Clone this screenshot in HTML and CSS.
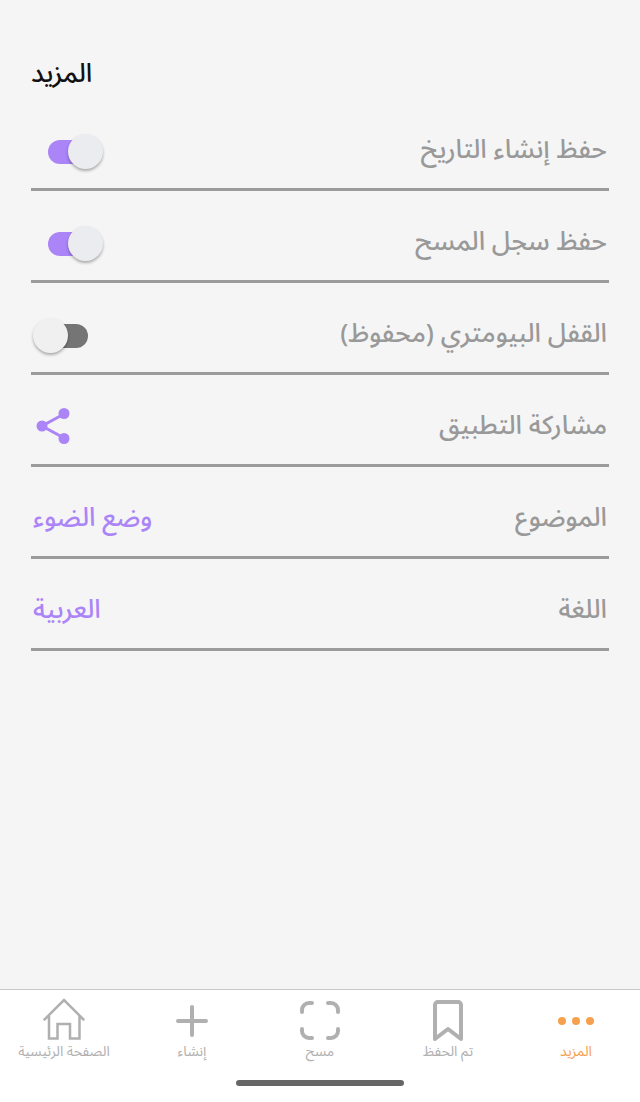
FILE: index.html
```html
<!DOCTYPE html>
<html lang="ar" dir="rtl">

<head>
    <meta charset="UTF-8">
    <meta name="viewport" content="width=device-width, initial-scale=1.0">
    <title>المزيد</title>

    <link rel="stylesheet" href="styles.css">
</head>

<body>
    <main class="settings">
        <h1 class="title">المزيد</h1>

        <div class="row">
            <label for="save-created">حفظ إنشاء التاريخ</label>
            <input class="switch" type="checkbox" id="save-created" checked>
        </div>
        <div class="row">
            <label for="save-scans">حفظ سجل المسح</label>
            <input class="switch" type="checkbox" id="save-scans" checked>
        </div>
        <div class="row">
            <label for="biometric">القفل البيومتري (محفوظ)</label>
            <input class="switch" type="checkbox" id="biometric">
        </div>
        <button class="row" type="button">
            <span>مشاركة التطبيق</span>
            <svg class="share" viewBox="0 0 44 40">
                <path d="M31 8 9 20l22 12" fill="none" stroke="currentColor" stroke-width="3" />
                <circle cx="31" cy="7.5" r="5.5" />
                <circle cx="9" cy="20" r="5.5" />
                <circle cx="31" cy="32.5" r="5.5" />
            </svg>
        </button>
        <button class="row" type="button">
            <span>الموضوع</span>
            <span class="value">وضع الضوء</span>
        </button>
        <button class="row" type="button">
            <span>اللغة</span>
            <span class="value">العربية</span>
        </button>
    </main>

    <footer class="footer">
        <nav class="tabs" dir="ltr">
            <a class="tab" href="#home">
                <svg class="house" viewBox="0 0 44 44">
                    <path d="M2.500 21.500 22 2l19.500 19.500M7 18v22.500h8.500V26h12.500v14.500h9.500V18" />
                </svg>
                <span>الصفحة الرئيسية</span>
            </a>
            <a class="tab" href="#create">
                <svg class="thick" viewBox="0 0 44 44">
                    <path d="M22 9v28M8 23h28" />
                </svg>
                <span>إنشاء</span>
            </a>
            <a class="tab" href="#scan">
                <svg class="thick" viewBox="0 0 44 44">
                    <path d="M4 14v-2a7 7 0 0 1 7-7h3M30 5h3a7 7 0 0 1 7 7v2M40 31v2a7 7 0 0 1-7 7h-3M14 40h-3a7 7 0 0 1-7-7v-2" />
                </svg>
                <span>مسح</span>
            </a>
            <a class="tab" href="#saved">
                <svg class="thick" viewBox="0 0 44 44">
                    <path d="M9 41V7a3 3 0 0 1 3-3h20a3 3 0 0 1 3 3v34L22 31Z" />
                </svg>
                <span>تم الحفظ</span>
            </a>
            <a class="tab active" href="#more">
                <svg class="dots" viewBox="0 0 44 44">
                    <circle cx="8" cy="23" r="4" />
                    <circle cx="22" cy="23" r="4" />
                    <circle cx="36" cy="23" r="4" />
                </svg>
                <span>المزيد</span>
            </a>
        </nav>
        <div class="home-bar"></div>
    </footer>
</body>

</html>
```
FILE: styles.css
```css
* {
    --purple: #ab84f8;
    --orange: #f6a04d;
    --text: #999;
    --line: #9b9b9b;
    --icon: #b0b0b0;

    box-sizing: border-box;
}

body {
    background-color: #f5f5f5;
    color: var(--text);
    display: flex;
    flex-direction: column;
    font-family: "Noto Sans Arabic", "Noto Naskh Arabic", "Liberation Serif", serif;
    margin: 0;
    min-height: 100vh;
}

.settings {
    flex: 1;
    padding: 54px 31px 32px;
}

.title {
    color: #111;
    font-size: 26px;
    font-weight: 500;
    line-height: 40px;
    margin: 0 0 5px;
    text-align: end;
}

.row {
    align-items: center;
    background: none;
    border: 0;
    border-bottom: 3px solid var(--line);
    color: inherit;
    display: flex;
    font: 500 26px/40px "Noto Sans Arabic", "Noto Naskh Arabic", "Liberation Serif", serif;
    height: 92px;
    justify-content: space-between;
    padding: 12px 2px 0;
    width: 100%;
}

.value {
    color: var(--purple);
}

.share {
    color: var(--purple);
    fill: var(--purple);
    height: 40px;
    width: 44px;
}

.switch {
    align-items: center;
    appearance: none;
    direction: ltr;
    display: grid;
    height: 36px;
    margin: 4px 0 0;
    width: 70px;
}

.switch::before,
.switch::after {
    content: "";
    grid-area: 1 / 1;
}

.switch::before {
    background-color: #757575;
    border-radius: 12px;
    height: 24px;
    justify-self: center;
    width: 40px;
}

.switch::after {
    background-color: #f0f0f0;
    border-radius: 50%;
    box-shadow: 0 2px 3px rgba(0, 0, 0, 0.3);
    height: 35px;
    justify-self: start;
    width: 35px;
}

.switch:checked::before {
    background-color: var(--purple);
}

.switch:checked::after {
    background-color: #ebecf0;
    justify-self: end;
}

.footer {
    background-color: white;
    border-top: 1px solid #c8c8c8;
    padding-bottom: 16px;
}

.tabs {
    display: grid;
    grid-template-columns: repeat(5, 1fr);
}

.tab {
    align-items: center;
    color: var(--icon);
    display: flex;
    flex-direction: column;
    font-size: 14px;
    line-height: 20px;
    padding: 8px 0;
    text-decoration: none;
    white-space: nowrap;
}

.tab svg {
    fill: none;
    height: 44px;
    stroke: currentColor;
    stroke-linecap: round;
    width: 44px;
}

.tab .house {
    stroke-width: 2.5;
}

.tab .thick {
    stroke-linejoin: round;
    stroke-width: 4;
}

.tab .dots {
    fill: currentColor;
    stroke: none;
}

.tab.active {
    color: var(--orange);
}

.home-bar {
    background-color: #666;
    border-radius: 3px;
    height: 6px;
    margin: 10px auto 0;
    width: 168px;
}
```
